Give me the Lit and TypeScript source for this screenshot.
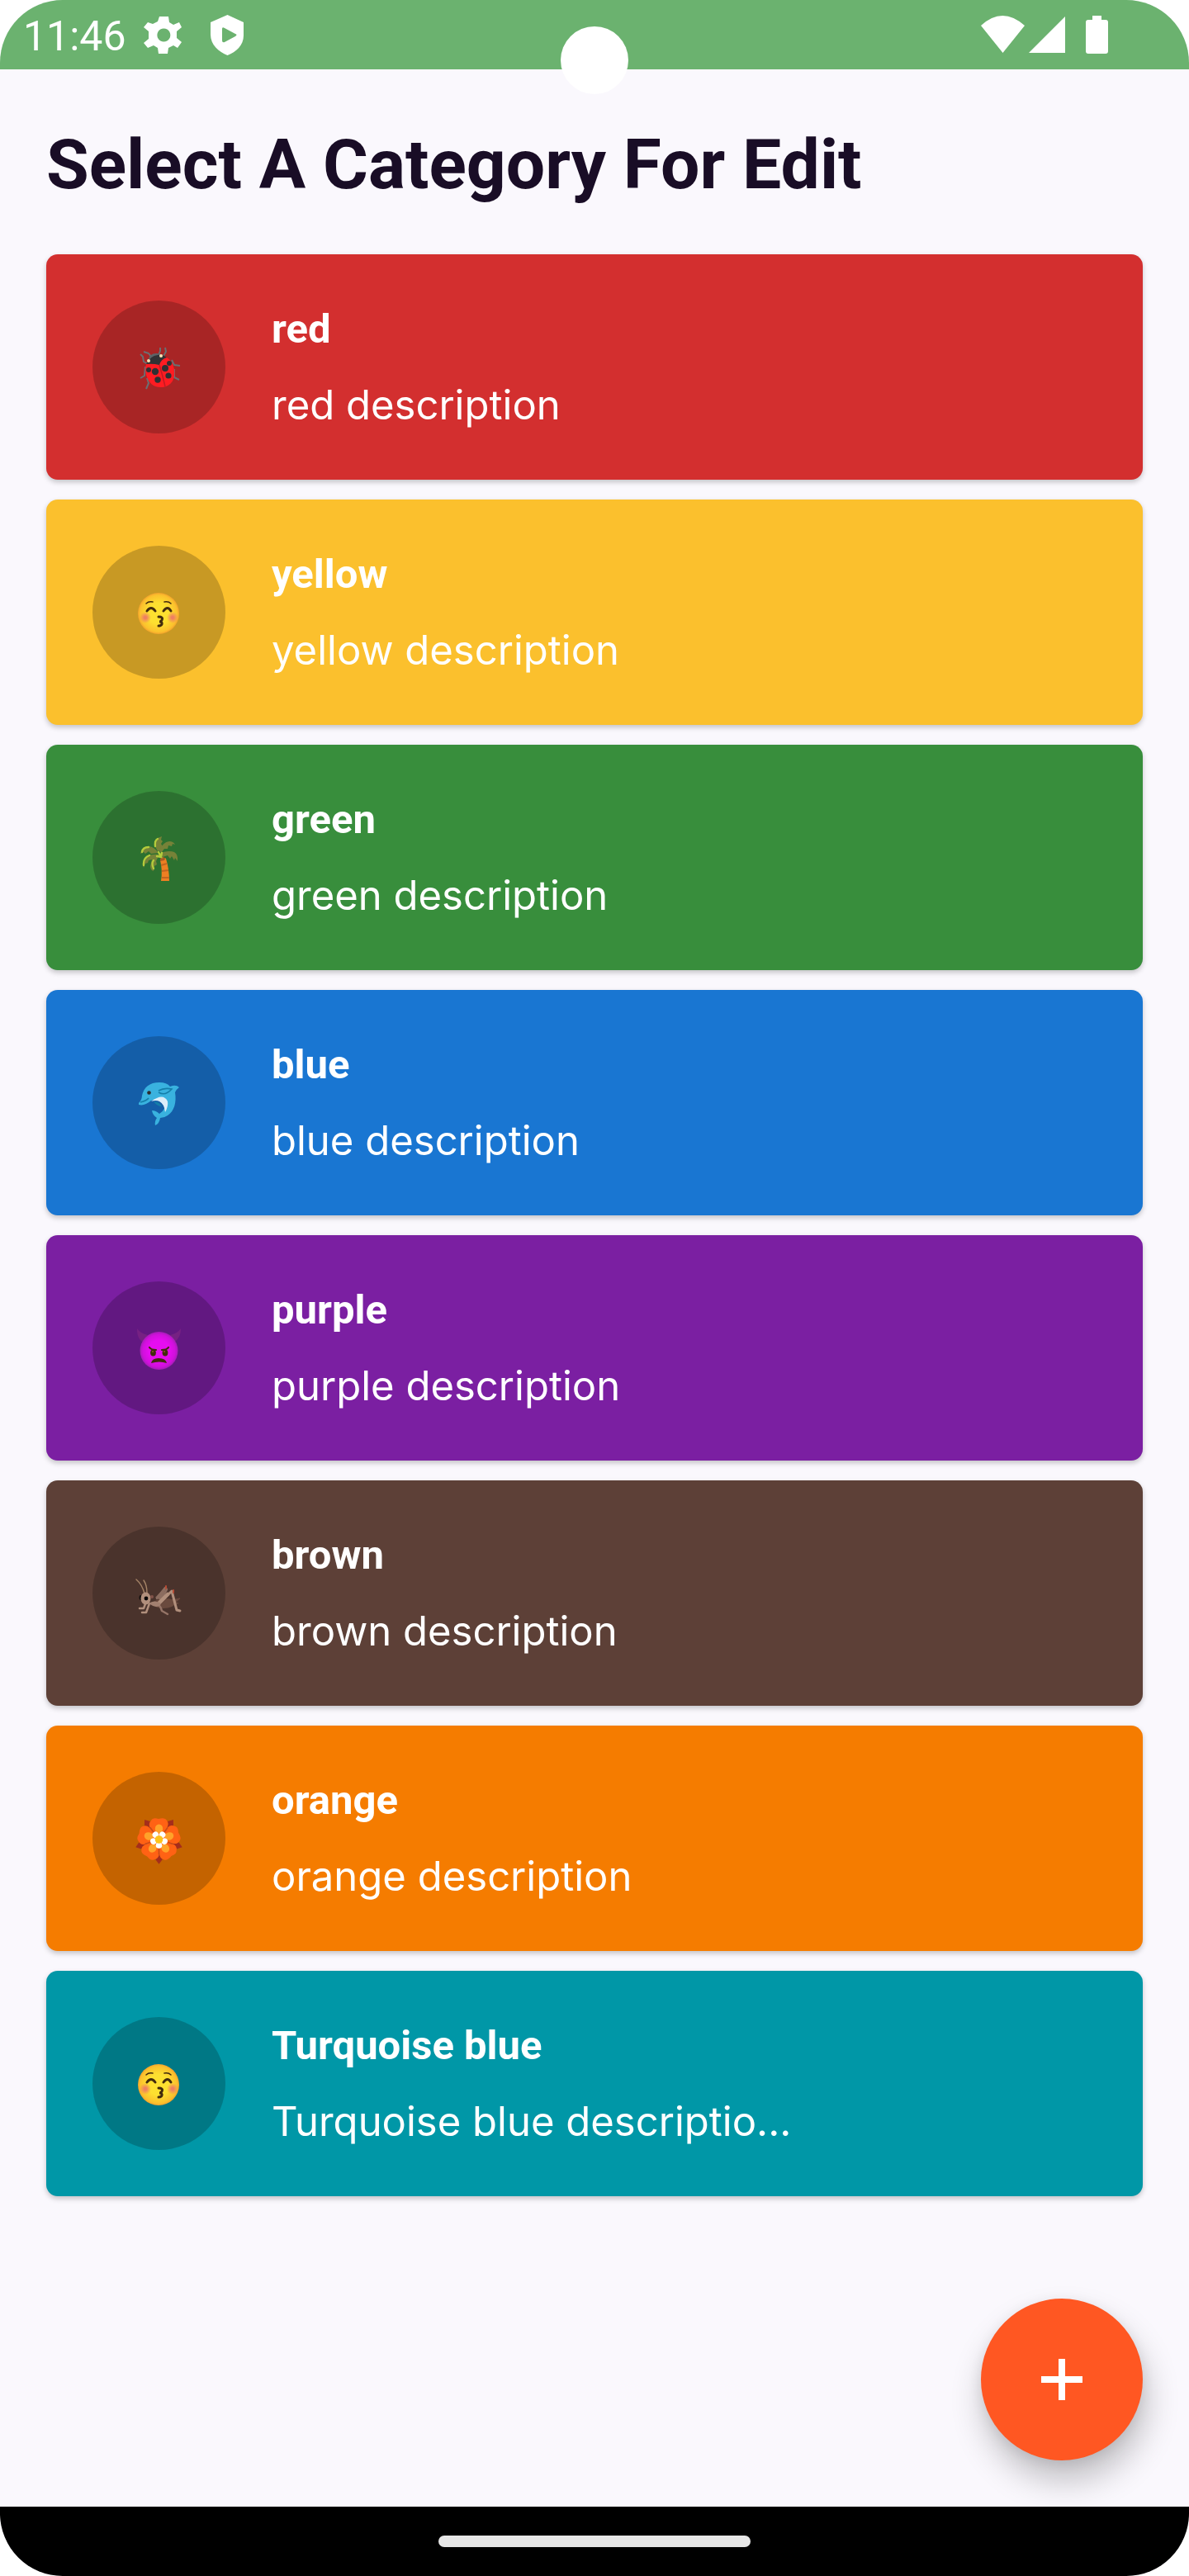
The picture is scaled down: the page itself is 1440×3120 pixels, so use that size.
import { LitElement, html, svg, css } from "lit";
import { customElement, property } from "lit/decorators.js";
import { styleMap } from "lit/directives/style-map.js";

/* Category emblems; each category sets the top edge of its view box. */
const ladybug = svg`
  <g fill="none" stroke="#6b6f72" stroke-width="2" stroke-linejoin="round">
    <path d="M33 32l-3-4-6-2M42 30l2-5V21"/>
    <path d="M29 41l-5-3-1-6-3-3M48 31l3-5-1-5M26 44l-1 11-5 3M28 58l2 6-3 7M58 36l3 6 7 1M61 47v10l6 3"/>
  </g>
  <path d="M29 37q2-9 10-9t8 4l-4 8z" fill="#5e6367"/>
  <path d="M27 41q5-10 14-11 6-1 11 3l-2 9-21 3z" fill="#313235"/>
  <path d="M27 41q8-1 16 1 2-7 9-9 7 4 9 14c2 12-4 21-14 22-11 1-17-5-20-15-1-5-1-9 0-13z" fill="#ff1c22"/>
  <path d="M43 42q4 13 7 26" fill="none" stroke="#c31922" stroke-width="1.5"/>
  <g fill="#303033"><circle cx="30" cy="48" r="3"/><circle cx="38" cy="50" r="4.2"/><circle cx="41" cy="60" r="3.7"/><circle cx="50" cy="46" r="4"/><circle cx="54" cy="55" r="3.6"/><circle cx="55" cy="40" r="3"/></g>
  <circle cx="30" cy="37" r="2" fill="#ffe4b4"/><circle cx="45" cy="31" r="2" fill="#ffe4b4"/>`;

const kiss = svg`
  <defs>
    <radialGradient id="face"><stop offset=".5" stop-color="#fde030"/><stop offset=".9" stop-color="#fbc02d"/><stop offset="1" stop-color="#f3a22b"/></radialGradient>
    <radialGradient id="blush"><stop offset=".2" stop-color="#ef7f62"/><stop offset="1" stop-color="#ef7f62" stop-opacity="0"/></radialGradient>
  </defs>
  <circle cx="42" cy="43" r="25" fill="url(#face)"/>
  <circle cx="26" cy="48" r="7" fill="url(#blush)"/><circle cx="59" cy="48" r="7" fill="url(#blush)"/>
  <g fill="none" stroke="#422b0d" stroke-linecap="round">
    <path d="M27 31q3-3 8-2M49 29q5-1 8 2" stroke-width="1.5"/>
    <path d="M28 40q5-7 10 0M48 40q5-7 9 0" stroke-width="3"/>
    <path d="M42 47q6 0 4 4-1 2-3 2 4 0 3 3-1 2-4 2" stroke-width="3"/>
  </g>`;

const palm = svg`
  <path d="M45 46q6-3 6-1 4 13 4 27H45q2-13-1-25z" fill="#ed7f22"/>
  <path d="M45 53l7-2M46 60l8-1M46 68h9" stroke="#c3651f" stroke-width="2"/>
  <path d="M44 45q4-4 6 0l-1 2-5 1z" fill="#a85a24"/>
  <g fill="#768238">
    <path d="M42 38q-8-11-17-7-4 2-5 8l4-2 2 2 4-3 3 3z"/>
    <path d="M41 36q-7-11 0-16l5-2-1 4 2 2-2 3 2 3-3 5z"/>
    <path d="M43 35q4-10 12-11 5 0 7 4l-3-1-1 3-4-1-1 4-4 0-4 5z"/>
    <path d="M42 39q12-5 19-2 5 3 4 11l-3-4-1 3-3-5-2 3-3-4-6 2z"/>
    <path d="M43 40q-11-1-16 3-6 5-3 13l2-5 3-1 1-3 4-1-2 8q0 5 4 6l1-6 3-2-1-4z"/>
  </g>
  <path d="M22 37q1-6 8-6M38 30q-1-7 3-9M24 53q-1-9 7-12M36 57q-3-6 0-10M40 42l5 1-3-6M45 43l1-5" fill="none" stroke="#b4cc3c" stroke-width="2.3" stroke-linecap="round"/>`;

const dolphin = svg`
  <path d="M18 46c2-2 4-5 4-9 2-10 9-16 21-16q9 0 13 5 7-3 11 1-3 2-5 6c2 12-1 23-9 28q-4 3-9 3-1 7-6 9-1-5 2-9-5-3-6-9 5 0 9 4 9-6 5-11-5-8-15-5-8 7-15 5z" fill="#39b2df"/>
  <path d="M33 44q15-11 20 0 1 6-3 13-1-10-7-13-4-2-10 0z" fill="#dcedf9"/>
  <path d="M36 44q7 0 10 6-6 0-10-6z" fill="#147ea9"/>
  <path d="M42 31q7-4 16-2-8 9-16 4M20 45q8-2 10-5" fill="none" stroke="#147ea9" stroke-width="1.6"/>
  <circle cx="30.5" cy="33.5" r="2.3" fill="#2d2b2e"/>`;

const imp = svg`
  <defs><radialGradient id="impFace"><stop offset=".55" stop-color="#e60df0"/><stop offset=".85" stop-color="#d010dc"/><stop offset="1" stop-color="#a81cb8"/></radialGradient></defs>
  <path d="M23 36c-6-5-7-10-7-17q4 6 13 8zM61 36c6-5 8-10 8-17q-4 6-13 8z" fill="#762183"/>
  <circle cx="42.5" cy="46" r="23" fill="url(#impFace)"/>
  <g fill="#422b0d"><ellipse cx="35.5" cy="48.5" rx="3.4" ry="4"/><ellipse cx="50" cy="48.5" rx="3.4" ry="4"/></g>
  <path d="M31 42q2 3 8 3M54 42q-2 3-8 3" fill="none" stroke="#422b0d" stroke-width="2.2" stroke-linecap="round"/>
  <path d="M33 61q1-6 9-6 9 0 10 6-9-3-19 0z" fill="#422b0d"/>
  <circle cx="35" cy="47" r="1" fill="#8b6021"/><circle cx="49" cy="47" r="1" fill="#8b6021"/>`;

const cricket = svg`
  <path d="M36 55q10-6 22-3l10-1-4 4q-4 8-16 8-9 0-14-5z" fill="#6a4a3e"/>
  <path d="M59 54l9-3M60 56l6 1" stroke="#6a4a3e" stroke-width="1.5"/>
  <path d="M38 50l11-12 3-1-5 12-2 4z" fill="#8c6d60"/>
  <g fill="none" stroke-linejoin="round" stroke-linecap="round">
    <path d="M40 51l10-13 2 2-6 12" stroke="#8c6d60" stroke-width="2.5"/>
    <path d="M39 58q5 0 7 8l7 4" stroke="#957467" stroke-width="2.5"/>
    <path d="M44 56l14-14 6 23 4 1" stroke="#b18f7c" stroke-width="3"/>
    <path d="M43 56l10-10" stroke="#b18f7c" stroke-width="4.5"/>
    <path d="M31 57l-4 11h-5M27 55l-3 8h-5" stroke="#b18f7c" stroke-width="2.5"/>
    <path d="M25 45Q22 34 15 28M28 44Q28 35 24 29" stroke="#a58467" stroke-width="1.4"/>
    <path d="M51 36v3M60 41v3" stroke="#b64b35" stroke-width="2"/>
  </g>
  <path d="M30 57q7-5 15 0-1 4-6 4-5-1-9-4z" fill="#a28070"/>
  <ellipse cx="20.5" cy="50" rx="2" ry="3" fill="#130f0e"/>
  <ellipse cx="26.5" cy="51" rx="6" ry="7.5" fill="#b18f7c"/>
  <circle cx="34" cy="49" r="2" fill="#82544a"/>
  <circle cx="27" cy="51" r="2.4" fill="#080606"/>`;

const rosette = svg`
  ${[0, 72, 144, 216, 288].map((a) => svg`<path transform="rotate(${a} 42.5 43)" d="M42.5 61l-1 4-2 2 3 4 3-4-2-2z" fill="#a52e1c" stroke="#a52e1c" stroke-width="2"/>`)}
  ${[0, 72, 144, 216, 288].map((a) => svg`<path transform="rotate(${a} 42.5 43)" d="M42.5 43L32 29q-3-5 1-9 2-4 9-2 8-2 10 2 3 4 0 9z" fill="#ff6214"/>`)}
  ${[36, 108, 180, 252, 324].map((a) => svg`<path transform="rotate(${a} 42.5 43)" d="M42.5 43V25" stroke="#c94c19" stroke-width="1.6"/>`)}
  ${[0, 72, 144, 216, 288].map((a) => svg`<ellipse transform="rotate(${a} 42.5 43)" cx="42.5" cy="30" rx="4.7" ry="5.5" fill="#ffa229"/>`)}
  ${[36, 108, 180, 252, 324].map((a) => svg`<circle transform="rotate(${a} 42.5 43)" cx="42.5" cy="36" r="3.8" fill="#fff"/>`)}
  <circle cx="42.5" cy="43" r="4.8" fill="#fdc31b"/>`;

const categories = [
  { name: "red", color: "#d32f2f", icon: ladybug, top: -1 },
  { name: "yellow", color: "#fbc02d", icon: kiss, top: -4 },
  { name: "green", color: "#388e3c", icon: palm, top: -2 },
  { name: "blue", color: "#1976d2", icon: dolphin, top: 0 },
  { name: "purple", color: "#7b1fa2", icon: imp, top: -3 },
  { name: "brown", color: "#5d4037", icon: cricket, top: -1 },
  { name: "orange", color: "#f57c00", icon: rosette, top: -4 },
  { name: "Turquoise blue", color: "#0097a7", icon: kiss, top: -4, description: "Turquoise blue descriptio..." },
];

@customElement("category-card")
class CategoryCard extends LitElement {
  @property({ attribute: false }) category: any;

  static styles = css`
    :host { display: block; }
    .card {
      display: flex; align-items: center; gap: 56px; width: 100%;
      box-sizing: border-box; padding: 56px; border: 0; border-radius: 14px;
      color: #fff; text-align: left; font-family: Roboto, sans-serif; cursor: pointer;
      box-shadow: 0 3px 6px rgba(0, 0, 0, 0.22);
    }
    .badge {
      display: flex; align-items: center; justify-content: center; flex: none;
      width: 161px; height: 161px; border-radius: 50%; background: rgba(0, 0, 0, 0.2);
    }
    .emblem { width: 91px; height: 91px; }
    .text { display: flex; flex-direction: column; gap: 24px; min-width: 0; }
    .name { font-size: 49px; line-height: 68px; font-weight: 700; }
    .description { font-family: Inter, sans-serif; font-size: 49px; line-height: 68px; }
  `;

  render() {
    const c = this.category;
    return html`<button class="card" type="button" style=${styleMap({ backgroundColor: c.color })}>
      <span class="badge"><svg class="emblem" viewBox="-3 ${c.top} 91 91" aria-hidden="true">${c.icon}</svg></span>
      <span class="text">
        <span class="name">${c.name}</span>
        <span class="description">${c.description ?? `${c.name} description`}</span>
      </span>
    </button>`;
  }
}

@customElement("app-root")
class AppRoot extends LitElement {
  static styles = css`
    :host { display: block; background: #fff; font-family: Roboto, sans-serif; }
    .screen {
      position: relative; display: flex; flex-direction: column; min-height: 100vh;
      overflow: hidden; border-radius: 76px; background: #faf8fd;
    }
    .status {
      display: flex; align-items: flex-start; justify-content: space-between;
      box-sizing: border-box; height: 84px; padding: 0 92px 0 28px;
      background: #6bb26f; color: #fff;
    }
    .group { display: flex; align-items: flex-start; }
    .clock { font-size: 50px; line-height: 88px; margin-right: 20px; }
    .glyph { display: block; height: 84px; fill: currentColor; }
    .camera {
      position: absolute; top: 32px; left: 50%; width: 82px; height: 82px;
      margin-left: -41px; border-radius: 50%; background: #fff;
    }
    .content { flex: 1; padding: 56px; }
    .title { margin: 0 0 48px; color: #190d26; font-size: 84px; line-height: 120px; font-weight: 700; }
    .list { display: flex; flex-direction: column; gap: 24px; margin: 0; padding: 0; list-style: none; }
    .add {
      position: absolute; right: 56px; bottom: 140px; display: flex;
      align-items: center; justify-content: center; width: 196px; height: 196px;
      padding: 0; border: 0; border-radius: 50%; background: #ff5722; cursor: pointer;
      box-shadow: 4px 24px 40px rgba(0, 0, 0, 0.24), 0 4px 16px rgba(0, 0, 0, 0.08);
    }
    .plus { width: 50px; height: 50px; fill: #fff; }
    .nav { display: flex; align-items: center; justify-content: center; height: 84px; background: #000; }
    .handle { width: 378px; height: 14px; border-radius: 7px; background: #e6e6e6; }
  `;

  render() {
    return html`<div class="screen">
      <header class="status">
        <div class="group">
          <span class="clock">11:46</span>
          <svg class="glyph" width="124" viewBox="172 0 124 84" aria-hidden="true">
            <path fill-rule="evenodd" d="M192 20h11l1 7 5 3 7-3 3 6-6 5v8l6 5-5 7-5-3-6 3-1 7h-11l-1-7-5-3-7 3-5-6 6-5v-9l-6-5 5-6 6 2 6-3zM197.300 34.500a8 8 0 1 0 .1 0z"/>
            <path fill-rule="evenodd" d="M274.500 18L294 27v16c0 12-9 20-19.500 24C264 63 254 54 254 42V27zM268 35v14q0 3 3 2l13-7q3-2 0-3l-13-7q-3-2-3 1z"/>
          </svg>
        </div>
        <svg class="glyph" width="160" viewBox="1188 0 160 84" aria-hidden="true">
          <path d="M1188 31q26-24 53 0l-26.500 33zM1246 64l44-44v44zM1315 27q0-3 3-3h5v-5h11v5h5q3 0 3 3v35q0 3-3 3h-21q-3 0-3-3z"/>
        </svg>
      </header>
      <main class="content">
        <h1 class="title">Select A Category For Edit</h1>
        <ul class="list">
          ${categories.map((c) => html`<li><category-card .category=${c}></category-card></li>`)}
        </ul>
      </main>
      <button class="add" type="button" aria-label="Add category">
        <svg class="plus" viewBox="0 0 50 50" aria-hidden="true"><path d="M21 0h8v21h21v8H29v21h-8V29H0v-8h21z"/></svg>
      </button>
      <footer class="nav"><div class="handle"></div></footer>
      <div class="camera"></div>
    </div>`;
  }
}
